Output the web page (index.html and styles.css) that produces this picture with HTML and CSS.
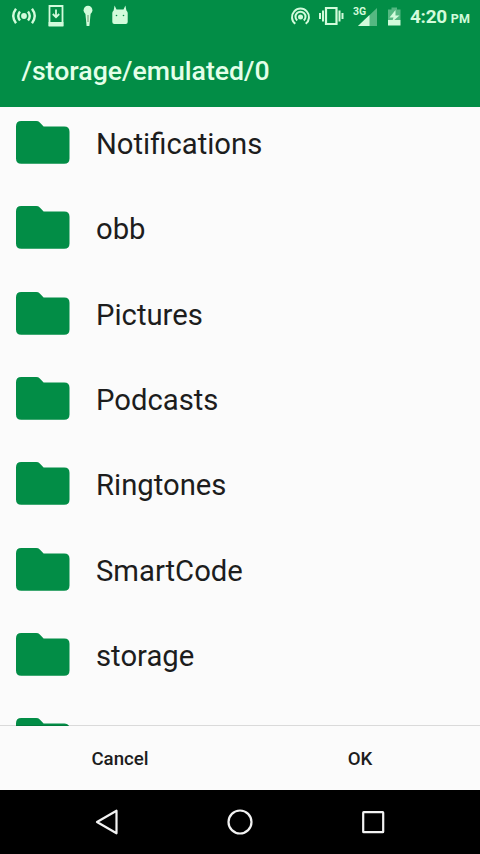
FILE: index.html
```html
<!DOCTYPE html>
<html lang="en">
<head>
<meta charset="utf-8">
<title>Folder picker</title>
<link rel="stylesheet" href="styles.css">
</head>
<body>
<svg width="0" height="0" class="defs" aria-hidden="true">
  <symbol id="folder" viewBox="0 0 54 43"><path d="M5.3 0H20.2Q22.4 0 23.8 1.4L27.6 5.4H48.2Q53.5 5.4 53.5 10.7V37.4Q53.5 42.7 48.2 42.7H5.3Q0 42.7 0 37.4V5.3Q0 0 5.3 0Z"/></symbol>
</svg>
<div class="screen">
  <header class="header">
    <div class="status">
      <svg class="status-left" width="140" height="32" viewBox="0 0 140 32">
        <g fill="none" stroke="currentColor" stroke-width="1.8">
          <path stroke-width="2.400" d="M20 11.500Q16.500 16 20 20.500M16 8.800Q10.500 16 16 23.200M28 11.500Q31.500 16 28 20.500M32 8.800Q37.500 16 32 23.200"/>
          <path d="M49.500 6H62.500V25H49.500Z"/>
          <path d="M56 9.500V17M52.800 14L56 17.200L59.200 14"/>
        </g>
        <g fill="currentColor">
          <circle cx="24" cy="16" r="2.900"/>
          <path d="M48.600 22H63.400V26.500H48.600Z"/>
          <circle cx="88" cy="10.200" r="4.400"/>
          <path d="M85.400 13.800H90.600L89.400 26H86.600Z"/>
          <path d="M114.600 5.500L116.500 9.500H123.500L125.400 5.500L126.400 10.500Q127.700 11.500 127.700 13V22Q127.700 24 125.700 24H114.300Q112.300 24 112.300 22V13Q112.300 11.500 113.600 10.500Z"/>
        </g>
        <path class="cutout" d="M88 15V22"/>
        <circle cx="116.500" cy="15.500" r=".8" class="eye"/><circle cx="123.500" cy="15.500" r=".8" class="eye"/>
      </svg>
      <div class="status-right">
        <svg width="116" height="32" viewBox="288 0 116 32">
          <g fill="none" stroke="currentColor" stroke-width="2">
            <path d="M295.300 23.800A8.500 8.500 0 1 1 305.700 23.800"/>
            <path d="M297.200 20.500A5 5 0 1 1 303.800 20.500"/>
            <path d="M326 8H336.500V24H326Z" stroke-width="2.200"/>
            <path d="M323 10.500V21.500M320 13V19M339.500 10.500V21.500M342.500 13V19"/>
          </g>
          <g fill="currentColor">
            <circle cx="300.500" cy="17" r="2.500"/>
            <path opacity=".4" d="M377 8V26H358Z"/>
            <path d="M369.500 15V26H358Z"/>
            <path opacity=".4" d="M391.500 7.500H397V9.500H400.500V20H388V9.500H391.500Z"/>
            <path d="M388 20H400.500V25.500H388Z"/>
            <path d="M395.500 10L389.500 17.500H393.500L392 22L399.500 15.500H395.500Z"/>
          </g>
          <text x="353" y="15.200" class="network">3G</text>
        </svg>
        <span class="clock">4:20</span><span class="period">PM</span>
      </div>
    </div>
    <h1 class="path">/storage/emulated/0</h1>
  </header>
  <main class="folders">
    <ul class="list">
      <li><svg><use href="#folder"/></svg><span>Notifications</span></li>
      <li><svg><use href="#folder"/></svg><span>obb</span></li>
      <li><svg><use href="#folder"/></svg><span>Pictures</span></li>
      <li><svg><use href="#folder"/></svg><span>Podcasts</span></li>
      <li><svg><use href="#folder"/></svg><span>Ringtones</span></li>
      <li><svg><use href="#folder"/></svg><span>SmartCode</span></li>
      <li><svg><use href="#folder"/></svg><span>storage</span></li>
      <li><svg><use href="#folder"/></svg></li>
    </ul>
  </main>
  <div class="actions">
    <button>Cancel</button>
    <button>OK</button>
  </div>
  <nav class="navbar">
    <svg width="480" height="64" viewBox="0 790 480 64" fill="none" stroke="currentColor" stroke-width="2.200" stroke-linejoin="round">
      <path d="M97 822L116.500 810.700V833.300Z"/>
      <circle cx="240" cy="822" r="11.500"/>
      <rect x="363.200" y="812.200" width="20" height="20" rx=".5"/>
    </svg>
  </nav>
</div>
</body>
</html>
```

FILE: styles.css
```css
* { box-sizing: border-box; }

body {
  margin: 0;
  font-family: Roboto, "Liberation Sans", sans-serif;
  background: #fbfbfb;
}

.defs { display: none; }

.screen {
  width: 480px;
  height: 854px;
  display: flex;
  flex-direction: column;
  overflow: hidden;
}

.header {
  flex: none;
  height: 106.500px;
  background: #028d46;
  color: #e4ffe9;
}

.status {
  height: 32px;
  display: flex;
  justify-content: space-between;
  color: #d2fbdb;
}

.status svg { display: block; }

.cutout { stroke: #709873; stroke-width: 1; }
.eye { fill: #028d46; }

.network {
  fill: currentColor;
  font-size: 10.500px;
  font-weight: 700;
}

.status-right {
  display: flex;
  align-items: baseline;
  width: 192px;
}

.status-right svg { align-self: flex-start; }

.clock {
  margin-left: 6px;
  font-size: 19px;
  font-weight: 700;
  line-height: 34px;
  letter-spacing: -0.300px;
}

.period {
  margin-left: 4px;
  font-size: 12.500px;
  font-weight: 700;
}

.path {
  margin: 0;
  padding-left: 21.500px;
  font-size: 26.670px;
  font-weight: 500;
  line-height: 78px;
}

.folders {
  flex: 1;
  min-height: 0;
  overflow: hidden;
}

.list {
  margin: -6.700px 0 0;
  padding: 0;
  list-style: none;
}

.list li {
  height: 85.330px;
  padding-left: 16px;
  display: flex;
  align-items: center;
  gap: 26px;
  font-size: 29.250px;
  color: #1d1d1d;
}

.list svg {
  width: 54px;
  height: 43px;
  fill: #028d46;
}

.list span { padding-top: 3px; }

.actions {
  flex: 0 0 65px;
  margin-top: -1px;
  position: relative;
  display: flex;
  border-top: 1px solid rgba(0, 0, 0, 0.13);
}

.actions button {
  flex: 1;
  padding: 2px 0 0;
  border: 0;
  background: none;
  font: 500 18.670px Roboto, "Liberation Sans", sans-serif;
  color: #1d1d1d;
}

.navbar {
  flex: 0 0 64px;
  background: #000;
  color: #f2f2f2;
}

.navbar svg { display: block; }
```
